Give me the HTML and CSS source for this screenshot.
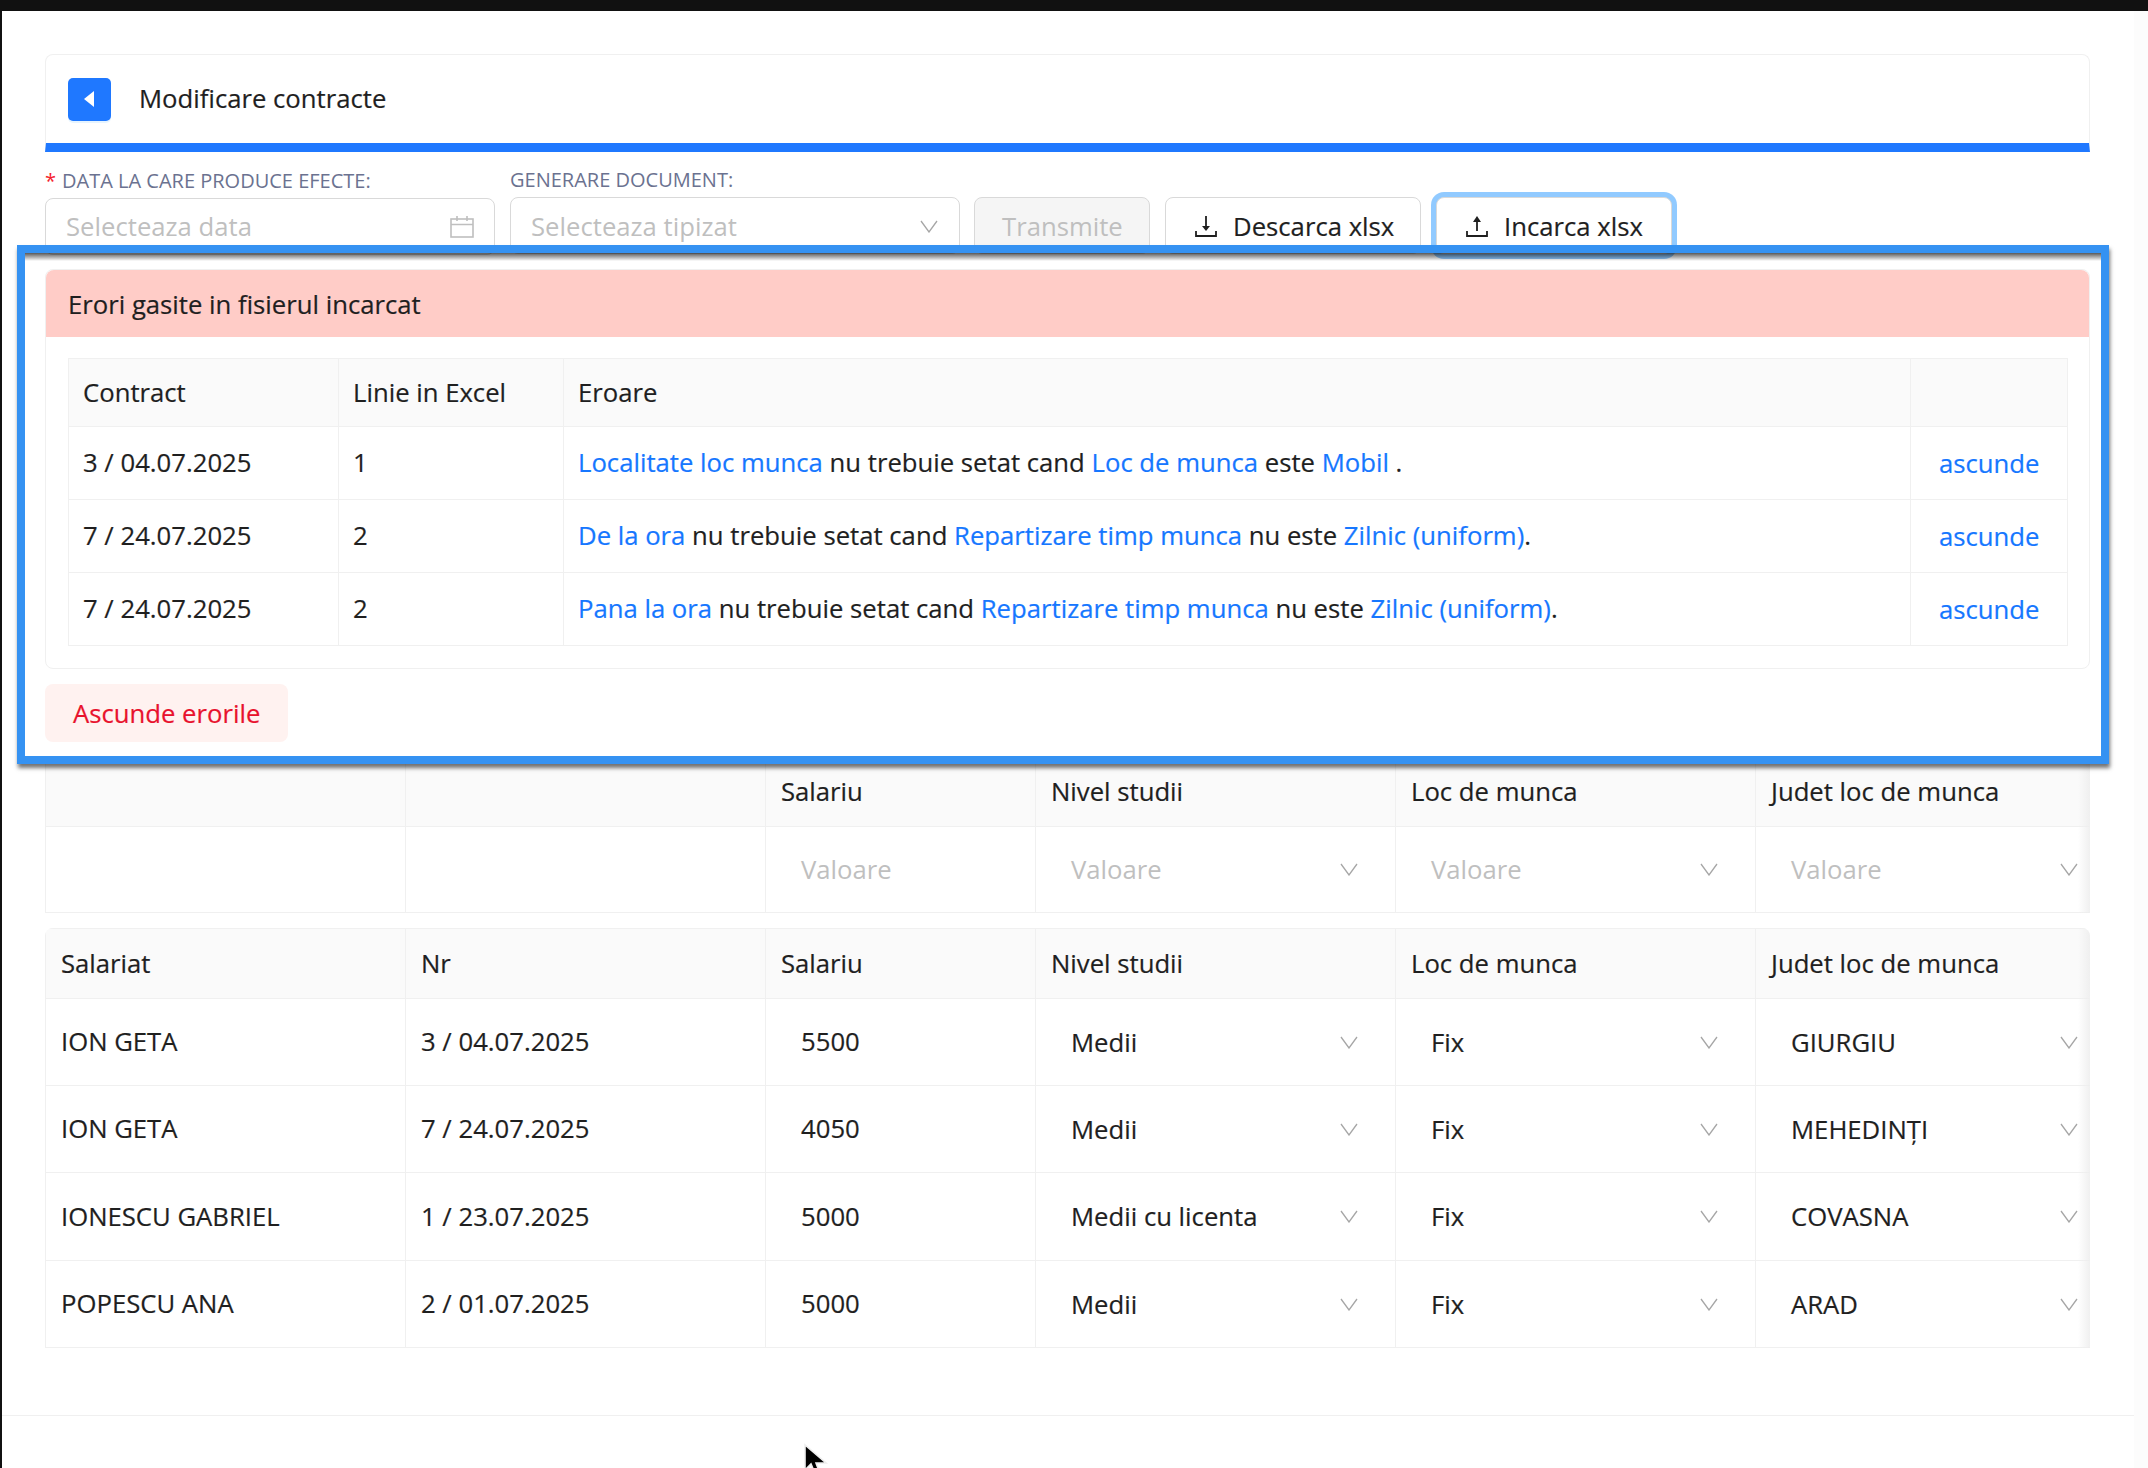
FILE: index.html
```html
<!DOCTYPE html>
<html lang="ro">
<head>
<meta charset="utf-8">
<title>Modificare contracte</title>
<link rel="stylesheet" href="styles.css">
</head>
<body>
<div class="topbar"></div>
<div class="shell">
  <main class="main">
    <header class="page-head">
      <button class="back-btn" type="button" aria-label="Inapoi">
        <svg width="11" height="16" viewBox="0 0 11 16"><path d="M10 0 V16 L0 8 Z" fill="#fff"/></svg>
      </button>
      <h1 class="page-title">Modificare contracte</h1>
    </header>

    <section class="form-row">
      <div class="field field-offset">
        <label class="field-label"><span class="req">*</span>DATA LA CARE PRODUCE EFECTE:</label>
        <div class="input">
          <span class="placeholder">Selecteaza data</span>
          <svg class="cal-icon" width="24" height="22" viewBox="0 0 24 22" fill="none" stroke="#bfbfbf" stroke-width="1.6"><rect x="1" y="3" width="22" height="18"/><path d="M1 8.5 H23 M7 0 V5 M17 0 V5"/></svg>
        </div>
      </div>
      <div class="field">
        <label class="field-label">GENERARE DOCUMENT:</label>
        <div class="input input-select">
          <span class="placeholder">Selecteaza tipizat</span>
          <svg class="chev" width="18" height="13" viewBox="0 0 18 13" fill="none" stroke="#a6a6a6" stroke-width="1.3"><path d="M1 1 L9 12 L17 1"/></svg>
        </div>
      </div>
      <button class="btn btn-disabled" type="button">Transmite</button>
      <button class="btn btn-down" type="button">
        <svg width="22" height="21" viewBox="0 0 22 21" fill="none" stroke="#1f1f1f" stroke-width="1.8"><path d="M11 0 V13"/><path d="M7 10 L11 15 L15 10 Z" fill="#1f1f1f" stroke="none"/><path d="M1 15 V20 H21 V15"/></svg>
        Descarca xlsx
      </button>
      <button class="btn btn-up" type="button">
        <svg width="22" height="21" viewBox="0 0 22 21" fill="none" stroke="#1f1f1f" stroke-width="1.8"><path d="M11 4 V15"/><path d="M7 6 L11 0 L15 6 Z" fill="#1f1f1f" stroke="none"/><path d="M1 15 V20 H21 V15"/></svg>
        Incarca xlsx
      </button>
    </section>

    <section class="errors-card">
      <div class="errors-title">Erori gasite in fisierul incarcat</div>
      <div class="errors-body">
        <table class="grid err-grid">
          <colgroup><col class="ec1"><col class="ec2"><col class="ec3"><col class="ec4"></colgroup>
          <thead>
            <tr><th>Contract</th><th>Linie in Excel</th><th>Eroare</th><th></th></tr>
          </thead>
          <tbody>
            <tr>
              <td>3 / 04.07.2025</td><td>1</td>
              <td><a class="lnk">Localitate loc munca</a> nu trebuie setat cand <a class="lnk">Loc de munca</a> este <a class="lnk">Mobil</a> .</td>
              <td class="hide-cell"><a class="lnk">ascunde</a></td>
            </tr>
            <tr>
              <td>7 / 24.07.2025</td><td>2</td>
              <td><a class="lnk">De la ora</a> nu trebuie setat cand <a class="lnk">Repartizare timp munca</a> nu este <a class="lnk">Zilnic (uniform)</a>.</td>
              <td class="hide-cell"><a class="lnk">ascunde</a></td>
            </tr>
            <tr>
              <td>7 / 24.07.2025</td><td>2</td>
              <td><a class="lnk">Pana la ora</a> nu trebuie setat cand <a class="lnk">Repartizare timp munca</a> nu este <a class="lnk">Zilnic (uniform)</a>.</td>
              <td class="hide-cell"><a class="lnk">ascunde</a></td>
            </tr>
          </tbody>
        </table>
      </div>
    </section>

    <button class="btn-danger" type="button">Ascunde erorile</button>

    <div class="table-wrap filter-wrap">
      <table class="grid data-grid">
        <colgroup><col class="dc1"><col class="dc1"><col class="dc3"><col class="dc1"><col class="dc1"><col class="dc1"></colgroup>
        <thead>
          <tr><th></th><th></th><th>Salariu</th><th>Nivel studii</th><th>Loc de munca</th><th>Judet loc de munca</th></tr>
        </thead>
        <tbody>
          <tr>
            <td></td><td></td>
            <td class="val-cell placeholder">Valoare</td>
            <td class="sel-cell"><div class="sel"><span class="placeholder">Valoare</span><svg class="chev" width="18" height="13" viewBox="0 0 18 13" fill="none" stroke="#a6a6a6" stroke-width="1.3"><path d="M1 1 L9 12 L17 1"/></svg></div></td>
            <td class="sel-cell"><div class="sel"><span class="placeholder">Valoare</span><svg class="chev" width="18" height="13" viewBox="0 0 18 13" fill="none" stroke="#a6a6a6" stroke-width="1.3"><path d="M1 1 L9 12 L17 1"/></svg></div></td>
            <td class="sel-cell"><div class="sel"><span class="placeholder">Valoare</span><svg class="chev" width="18" height="13" viewBox="0 0 18 13" fill="none" stroke="#a6a6a6" stroke-width="1.3"><path d="M1 1 L9 12 L17 1"/></svg></div></td>
          </tr>
        </tbody>
      </table>
    </div>

    <div class="table-wrap data-wrap">
      <table class="grid data-grid">
        <colgroup><col class="dc1"><col class="dc1"><col class="dc3"><col class="dc1"><col class="dc1"><col class="dc1"></colgroup>
        <thead>
          <tr><th>Salariat</th><th>Nr</th><th>Salariu</th><th>Nivel studii</th><th>Loc de munca</th><th>Judet loc de munca</th></tr>
        </thead>
        <tbody>
          <tr>
            <td>ION GETA</td><td>3 / 04.07.2025</td><td class="val-cell">5500</td>
            <td class="sel-cell"><div class="sel"><span>Medii</span><svg class="chev" width="18" height="13" viewBox="0 0 18 13" fill="none" stroke="#a6a6a6" stroke-width="1.3"><path d="M1 1 L9 12 L17 1"/></svg></div></td>
            <td class="sel-cell"><div class="sel"><span>Fix</span><svg class="chev" width="18" height="13" viewBox="0 0 18 13" fill="none" stroke="#a6a6a6" stroke-width="1.3"><path d="M1 1 L9 12 L17 1"/></svg></div></td>
            <td class="sel-cell"><div class="sel"><span>GIURGIU</span><svg class="chev" width="18" height="13" viewBox="0 0 18 13" fill="none" stroke="#a6a6a6" stroke-width="1.3"><path d="M1 1 L9 12 L17 1"/></svg></div></td>
          </tr>
          <tr>
            <td>ION GETA</td><td>7 / 24.07.2025</td><td class="val-cell">4050</td>
            <td class="sel-cell"><div class="sel"><span>Medii</span><svg class="chev" width="18" height="13" viewBox="0 0 18 13" fill="none" stroke="#a6a6a6" stroke-width="1.3"><path d="M1 1 L9 12 L17 1"/></svg></div></td>
            <td class="sel-cell"><div class="sel"><span>Fix</span><svg class="chev" width="18" height="13" viewBox="0 0 18 13" fill="none" stroke="#a6a6a6" stroke-width="1.3"><path d="M1 1 L9 12 L17 1"/></svg></div></td>
            <td class="sel-cell"><div class="sel"><span>MEHEDINȚI</span><svg class="chev" width="18" height="13" viewBox="0 0 18 13" fill="none" stroke="#a6a6a6" stroke-width="1.3"><path d="M1 1 L9 12 L17 1"/></svg></div></td>
          </tr>
          <tr>
            <td>IONESCU GABRIEL</td><td>1 / 23.07.2025</td><td class="val-cell">5000</td>
            <td class="sel-cell"><div class="sel"><span>Medii cu licenta</span><svg class="chev" width="18" height="13" viewBox="0 0 18 13" fill="none" stroke="#a6a6a6" stroke-width="1.3"><path d="M1 1 L9 12 L17 1"/></svg></div></td>
            <td class="sel-cell"><div class="sel"><span>Fix</span><svg class="chev" width="18" height="13" viewBox="0 0 18 13" fill="none" stroke="#a6a6a6" stroke-width="1.3"><path d="M1 1 L9 12 L17 1"/></svg></div></td>
            <td class="sel-cell"><div class="sel"><span>COVASNA</span><svg class="chev" width="18" height="13" viewBox="0 0 18 13" fill="none" stroke="#a6a6a6" stroke-width="1.3"><path d="M1 1 L9 12 L17 1"/></svg></div></td>
          </tr>
          <tr>
            <td>POPESCU ANA</td><td>2 / 01.07.2025</td><td class="val-cell">5000</td>
            <td class="sel-cell"><div class="sel"><span>Medii</span><svg class="chev" width="18" height="13" viewBox="0 0 18 13" fill="none" stroke="#a6a6a6" stroke-width="1.3"><path d="M1 1 L9 12 L17 1"/></svg></div></td>
            <td class="sel-cell"><div class="sel"><span>Fix</span><svg class="chev" width="18" height="13" viewBox="0 0 18 13" fill="none" stroke="#a6a6a6" stroke-width="1.3"><path d="M1 1 L9 12 L17 1"/></svg></div></td>
            <td class="sel-cell"><div class="sel"><span>ARAD</span><svg class="chev" width="18" height="13" viewBox="0 0 18 13" fill="none" stroke="#a6a6a6" stroke-width="1.3"><path d="M1 1 L9 12 L17 1"/></svg></div></td>
          </tr>
        </tbody>
      </table>
    </div>

    <div class="page-foot"></div>
  </main>
  <div class="scroll-track"></div>
</div>

<div class="highlight"></div>
<svg class="cursor" width="26" height="28" viewBox="0 0 26 28"><path d="M2 2 L2 27 L8 21 L11 28 L16 28 L13 20 L23 20 Z" fill="#000" stroke="#eee" stroke-width="1.6"/></svg>
</body>
</html>
```
FILE: styles.css
```css
* { box-sizing: border-box; }

html, body {
  margin: 0;
  height: 100%;
}

body {
  position: relative;
  width: 2148px;
  height: 1468px;
  overflow: hidden;
  background: #fff;
  color: #1f1f1f;
  font-family: "Open Sans", "Noto Sans", sans-serif;
  font-size: 25.7px;
  -webkit-text-stroke: .2px;
}

.topbar {
  height: 11px;
  background: #111;
}

.shell {
  display: flex;
  height: 1457px;
  border-left: 2px solid #111;
}

.main {
  flex: 1;
  min-width: 0;
  padding: 43px 44px 0 43px;
}

.scroll-track {
  width: 14px;
  background: #fcfcfc;
}

.page-head {
  display: flex;
  align-items: center;
  gap: 28px;
  height: 98px;
  padding-left: 22px;
  background: #fff;
  border: 1px solid #f0f0f0;
  border-bottom: 9px solid #1f78ff;
  border-radius: 8px 8px 0 0;
}

.back-btn {
  display: flex;
  align-items: center;
  justify-content: center;
  width: 43px;
  height: 43px;
  padding: 0;
  border: 0;
  border-radius: 5px;
  background: #1f78ff;
  box-shadow: 0 2px 0 rgba(5, 145, 255, .1);
}

.page-title {
  margin: 0;
  font-size: 25.7px;
  font-weight: 400;
  line-height: 32px;
}

.form-row {
  display: flex;
  align-items: flex-start;
  margin-top: 13px;
}

.field {
  display: flex;
  flex-direction: column;
  width: 450px;
  margin-right: 15px;
}

.field-offset {
  padding-top: 1px;
}

.field-offset .input {
  padding-bottom: 1px;
}

.field-label {
  height: 32px;
  line-height: 30px;
  font-size: 20px;
  color: #6b7290;
  white-space: nowrap;
  -webkit-text-stroke: 0;
}

.req {
  margin-right: 6px;
  color: #f5222d;
}

.input {
  display: flex;
  align-items: center;
  justify-content: space-between;
  height: 57px;
  padding: 1px 20px 0;
  border: 1px solid #d9d9d9;
  border-radius: 8px;
  background: #fff;
}

.input-select {
  padding-right: 21px;
}

.placeholder {
  color: #bfbfbf;
  -webkit-text-stroke: 0;
}

.btn {
  display: flex;
  align-items: center;
  height: 57px;
  margin-top: 32px;
  border: 1px solid #d9d9d9;
  border-radius: 8px;
  background: #fff;
  color: #1f1f1f;
  font: inherit;
  white-space: nowrap;
}

.btn-disabled {
  width: 176px;
  margin-left: -1px;
  margin-right: 15px;
  padding: 1px 0 0 27px;
  background: #f5f5f5;
  color: #bfbfbf;
  -webkit-text-stroke: 0;
}

.btn-down {
  gap: 16px;
  width: 256px;
  margin-right: 15px;
  padding: 1px 0 0 29px;
}

.btn-up {
  gap: 16px;
  width: 236px;
  padding: 1px 0 0 29px;
  box-shadow: 0 0 0 5px #91caff;
}

.errors-card {
  margin-top: 14px;
  border: 1px solid #f0f0f0;
  border-radius: 8px;
  background: #fff;
}

.errors-title {
  display: flex;
  align-items: center;
  height: 67px;
  padding: 1px 0 0 22px;
  border-radius: 8px 8px 0 0;
  background: #ffccc7;
}

.errors-body {
  padding: 21px 22px 22px;
}

.grid {
  table-layout: fixed;
  border-collapse: separate;
  border-spacing: 0;
  border-left: 1px solid #f0f0f0;
}

.grid th,
.grid td {
  padding: 0 15px;
  border-right: 1px solid #f0f0f0;
  border-bottom: 1px solid #f0f0f0;
  font-weight: 400;
  text-align: left;
  white-space: nowrap;
}

.grid th {
  height: 71px;
  background: #fafafa;
  border-top: 1px solid #f0f0f0;
}

.err-grid {
  width: 100%;
}

.err-grid th {
  height: 69px;
}

.err-grid td {
  height: 73px;
  padding-bottom: 1px;
}

.err-grid th,
.err-grid td {
  padding-left: 14px;
}

.ec1 { width: 270px; }
.ec2 { width: 225px; }
.ec3 { width: 1347px; }
.ec4 { width: 157px; }

.lnk {
  color: #1677ff;
}

.grid .hide-cell {
  padding: 0 0 0 28px;
}

.btn-danger {
  display: block;
  width: 243px;
  height: 58px;
  margin-top: 15px;
  padding: 1px 0 0 28px;
  border: 0;
  border-radius: 8px;
  background: #fff2f0;
  color: #e8122d;
  font: inherit;
  text-align: left;
}

.table-wrap {
  position: relative;
  overflow: hidden;
  border-radius: 8px 8px 0 0;
}

.table-wrap::after {
  content: "";
  position: absolute;
  top: 0;
  right: 0;
  bottom: 0;
  width: 12px;
  background: linear-gradient(to right, rgba(240, 240, 240, 0), rgba(238, 238, 238, .9));
}

.filter-wrap {
  margin-top: 14px;
}

.data-wrap {
  margin-top: 15px;
}

.data-grid {
  width: 2070px;
}

.dc1 { width: 360px; }
.dc3 { width: 270px; }

.data-grid td {
  height: 87px;
  padding-bottom: 1px;
}

.filter-wrap .data-grid td {
  height: 86px;
}

.data-grid tr:nth-child(3) td {
  height: 88px;
}

.data-grid .val-cell {
  padding-left: 35px;
}

.data-grid .sel-cell {
  padding: 0 37px 0 35px;
}

.sel {
  display: flex;
  align-items: center;
  justify-content: space-between;
}

.chev {
  flex: none;
}

.page-foot {
  height: 1px;
  margin: 67px -44px 0 -43px;
  background: #f0f0f0;
}

.highlight {
  position: absolute;
  left: 17px;
  top: 245px;
  width: 2092px;
  height: 519px;
  border: 8px solid #3592f2;
  box-shadow: 1px 4px 4px rgba(0, 0, 0, .55);
  pointer-events: none;
}

.highlight::before {
  content: "";
  display: block;
  height: 8px;
  background: linear-gradient(to bottom, rgba(0, 0, 0, .65), rgba(0, 0, 0, 0));
}

.cursor {
  position: absolute;
  left: 803px;
  top: 1443px;
}
```
